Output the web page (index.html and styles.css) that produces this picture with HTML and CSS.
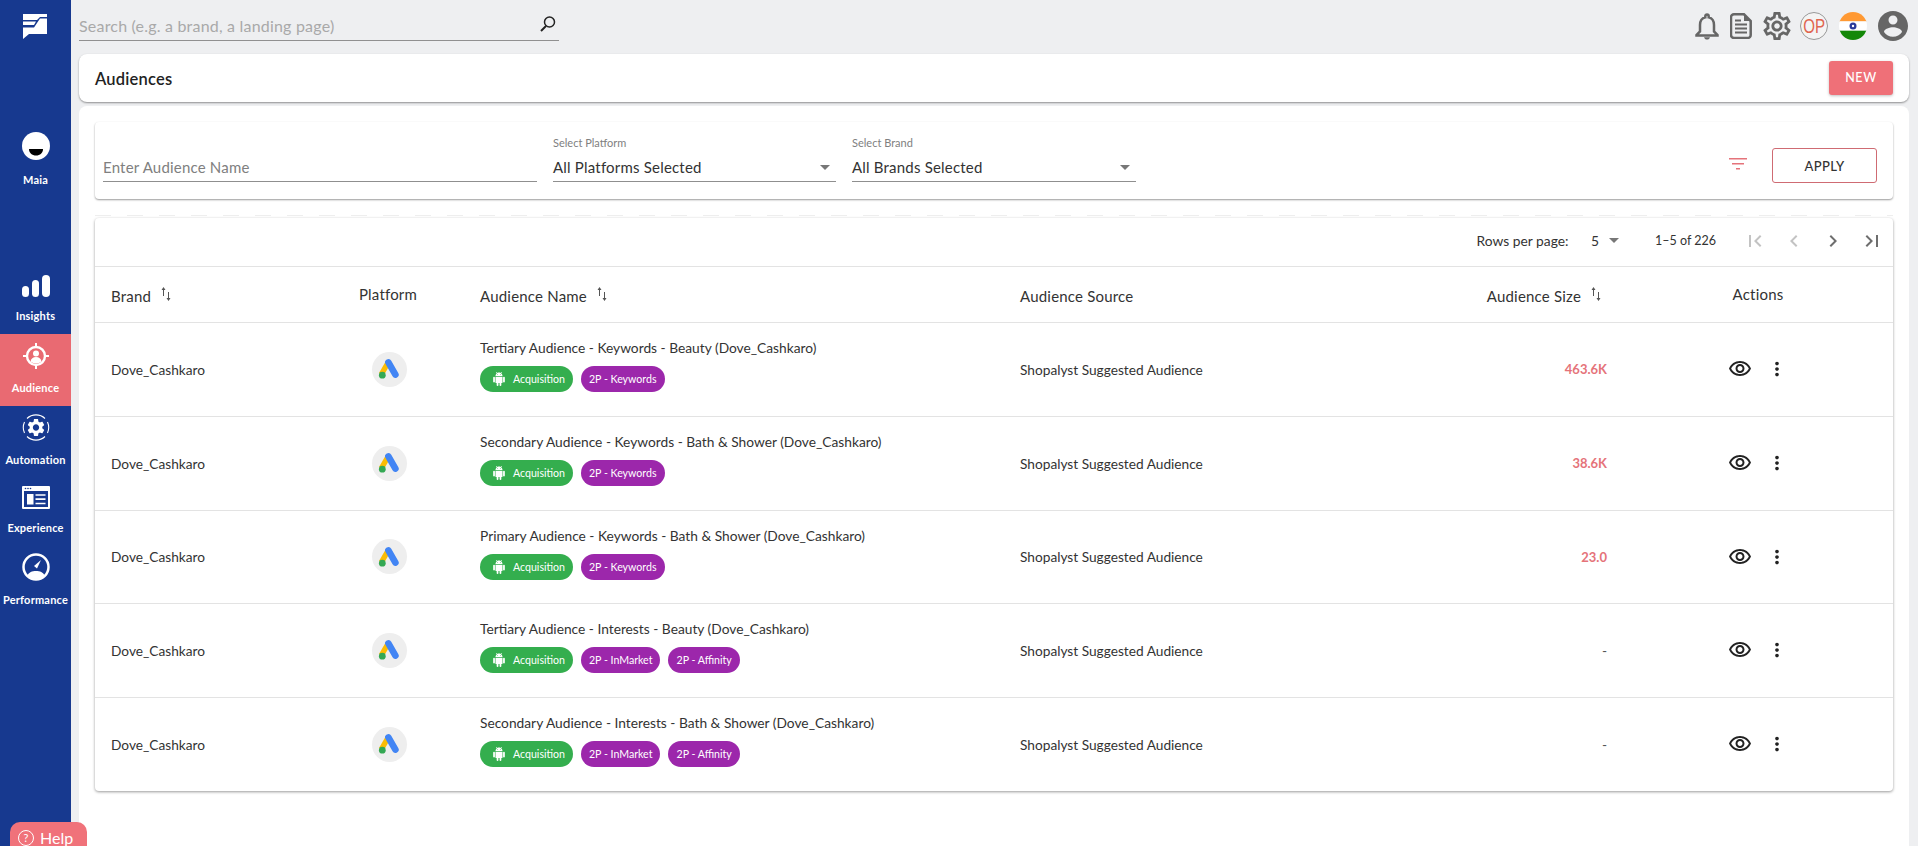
FILE: index.html
```html
<!DOCTYPE html>
<html lang="en">
<head>
<meta charset="utf-8">
<title>Audiences</title>
<link rel="stylesheet" href="styles.css">
</head>
<body>
<svg class="sprite" aria-hidden="true">
<symbol id="eye" viewBox="0 0 24 24"><path d="M12 6c3.79 0 7.17 2.13 8.82 5.5C19.17 14.87 15.79 17 12 17s-7.17-2.13-8.82-5.5C4.83 8.13 8.21 6 12 6m0-2C7 4 2.73 7.11 1 11.5 2.73 15.89 7 19 12 19s9.27-3.11 11-7.5C21.27 7.11 17 4 12 4zm0 5c1.38 0 2.5 1.12 2.5 2.5S13.38 14 12 14s-2.5-1.12-2.5-2.5S10.62 9 12 9m0-2c-2.48 0-4.5 2.02-4.5 4.5S9.52 16 12 16s4.5-2.02 4.5-4.5S14.48 7 12 7z"/></symbol>
<symbol id="dots" viewBox="0 0 24 24"><path d="M12 8c1.1 0 2-.9 2-2s-.9-2-2-2-2 .9-2 2 .9 2 2 2zm0 2c-1.1 0-2 .9-2 2s.9 2 2 2 2-.9 2-2-.9-2-2-2zm0 6c-1.1 0-2 .9-2 2s.9 2 2 2 2-.9 2-2-.9-2-2-2z"/></symbol>
<symbol id="android" viewBox="0 0 24 24"><path d="M6 18c0 .55.45 1 1 1h1v3.5c0 .83.67 1.5 1.5 1.5s1.5-.67 1.5-1.5V19h2v3.5c0 .83.67 1.5 1.5 1.5s1.5-.67 1.5-1.5V19h1c.55 0 1-.45 1-1V8H6v10zM3.5 8C2.67 8 2 8.67 2 9.5v7c0 .83.67 1.5 1.5 1.5S5 17.33 5 16.5v-7C5 8.67 4.33 8 3.5 8zm17 0c-.83 0-1.5.67-1.5 1.5v7c0 .83.67 1.5 1.5 1.5s1.5-.67 1.5-1.5v-7c0-.83-.67-1.5-1.5-1.5zm-4.97-5.84l1.3-1.3c.2-.2.2-.51 0-.71-.2-.2-.51-.2-.71 0l-1.48 1.48C13.85 1.23 12.95 1 12 1c-.96 0-1.86.23-2.66.63L7.85.15c-.2-.2-.51-.2-.71 0-.2.2-.2.51 0 .71l1.31 1.31C6.97 3.26 6 5.01 6 7h12c0-1.99-.97-3.75-2.47-4.84zM10 5H9V4h1v1zm5 0h-1V4h1v1z"/></symbol>
<symbol id="ads" viewBox="0 0 24 24"><path fill="#fbbc04" d="M9.2 3.6 2 16.1l4.6 2.7 7.2-12.5z"/><rect fill="#4285f4" x="11.6" y="1.2" width="6.6" height="20.6" rx="3.3" transform="rotate(-30 14.9 11.5)"/><circle fill="#34a853" cx="5.3" cy="18.2" r="3.4"/></symbol>
<symbol id="sort" viewBox="0 0 10 14"><path d="M2.5 0 .5 3H2v6h1V3h1.5zM7.5 14l2-3H8V5H7v6H5.5z"/></symbol>
</svg>

<aside class="sidebar">
  <svg class="logo" viewBox="0 0 24 25"><path fill="#fff" d="M0 0H24V3H17L14 6H0ZM0 7.5H13L11 11H0ZM0 13.5H11L17 4.5H24V20H6L0 25Z"/></svg>
  <nav class="nav">
    <a class="nav-item maia">
      <svg class="nav-icon" viewBox="0 0 28 28"><ellipse cx="14" cy="14" rx="14" ry="14" fill="#fff"/><path d="M7 17h14c0 4-3 6.5-7 6.5S7 21 7 17z" fill="#000"/></svg>
      <span>Maia</span>
    </a>
    <a class="nav-item insights">
      <svg class="nav-icon" viewBox="0 0 28 22"><rect x="0" y="11" width="7" height="11" rx="3.5" fill="#fff"/><rect x="10" y="5" width="7" height="17" rx="3.5" fill="#fff"/><rect x="20" y="0" width="8" height="22" rx="4" fill="#fff"/></svg>
      <span>Insights</span>
    </a>
    <a class="nav-item audience active">
      <svg class="nav-icon" viewBox="0 0 28 26"><circle cx="14" cy="13" r="9" fill="none" stroke="#fff" stroke-width="2.4"/><path d="M14 0v5M14 21v5M1 13h5M22 13h5" stroke="#fff" stroke-width="2"/><circle cx="14" cy="10.5" r="3" fill="#fff"/><path d="M8.5 18.5c.5-3 2.5-4.5 5.5-4.5s5 1.5 5.5 4.5c-3 2.500-8 2.500-11 0z" fill="#fff"/></svg>
      <span>Audience</span>
    </a>
    <a class="nav-item automation">
      <svg class="nav-icon" viewBox="0 0 28 29"><path d="M5 5.5a13 13 0 0 1 18 0M23 23.5a13 13 0 0 1-18 0M2.5 9a13.5 13.5 0 0 0 0 11M25.5 9a13.5 13.5 0 0 1 0 11" fill="none" stroke="#fff" stroke-width="1.1"/><g transform="translate(3.5 4) scale(.875)"><path fill="#fff" d="M19.14 12.94c.04-.3.06-.61.06-.94 0-.32-.02-.64-.07-.94l2.03-1.58c.18-.14.23-.41.12-.61l-1.92-3.32c-.12-.22-.37-.29-.59-.22l-2.39.96c-.5-.38-1.03-.7-1.62-.94l-.36-2.54c-.04-.24-.24-.41-.48-.41h-3.84c-.24 0-.43.17-.47.41l-.36 2.54c-.59.24-1.13.57-1.62.94l-2.39-.96c-.22-.08-.47 0-.59.22L2.74 8.87c-.12.21-.08.47.12.61l2.03 1.58c-.05.3-.09.63-.09.94s.02.64.07.94l-2.03 1.58c-.18.14-.23.41-.12.61l1.92 3.32c.12.22.37.29.59.22l2.39-.96c.5.38 1.03.7 1.62.94l.36 2.54c.05.24.24.41.48.41h3.84c.24 0 .44-.17.47-.41l.36-2.54c.59-.24 1.13-.56 1.62-.94l2.39.96c.22.08.47 0 .59-.22l1.92-3.32c.12-.22.07-.47-.12-.61l-2.01-1.58zM12 15.6c-1.98 0-3.6-1.62-3.6-3.6s1.62-3.6 3.6-3.6 3.6 1.62 3.6 3.6-1.62 3.6-3.6 3.6z"/></g></svg>
      <span>Automation</span>
    </a>
    <a class="nav-item experience">
      <svg class="nav-icon" viewBox="0 0 28 23"><path fill="#fff" fill-rule="evenodd" d="M1 0h26a1 1 0 0 1 1 1v21a1 1 0 0 1-1 1H1a1 1 0 0 1-1-1V1a1 1 0 0 1 1-1zM2 5v16h24V5z"/><circle cx="3.5" cy="2.5" r=".8" fill="#17398f"/><circle cx="6" cy="2.5" r=".8" fill="#17398f"/><circle cx="8.5" cy="2.5" r=".8" fill="#17398f"/><rect x="5" y="8" width="6.5" height="10.5" fill="#fff"/><path d="M13.5 9h10M13.5 13.2h10M13.5 17.5h10" stroke="#fff" stroke-width="1.7"/></svg>
      <span>Experience</span>
    </a>
    <a class="nav-item performance">
      <svg class="nav-icon" viewBox="0 0 28 28"><circle cx="14" cy="14" r="12.5" fill="none" stroke="#fff" stroke-width="2.5"/><path d="M5 23c2-4 5-5 9-5s7 1 9 5c-5 4-13 4-18 0z" fill="#fff"/><path d="M12 13 19 7l-4 8.5z" fill="#fff"/></svg>
      <span>Performance</span>
    </a>
  </nav>
</aside>

<div class="main">
  <header class="topbar">
    <div class="search">
      <span class="search-text">Search (e.g. a brand, a landing page)</span>
      <svg class="search-icon" viewBox="0 0 18 18"><circle cx="10.5" cy="7" r="5" fill="none" stroke="#222" stroke-width="1.5"/><path d="M7 11 2 16" stroke="#222" stroke-width="2"/></svg>
    </div>
    <div class="top-icons">
      <svg class="bell" viewBox="0 0 24 28"><path d="M12 2.5a1.7 1.7 0 0 0-1.7 1.7v1.2C6.5 6.3 5 9.5 5 13v6.5L1.5 23v.5h21V23L19 19.5V13c0-3.5-1.5-6.7-5.3-7.6V4.2A1.7 1.7 0 0 0 12 2.5z" fill="none" stroke="#666" stroke-width="2.5"/><path d="M9 25.3h6c-.5 1.5-1.5 2.3-3 2.3s-2.5-.8-3-2.3z" fill="#666"/></svg>
      <svg class="doc" viewBox="0 0 22 26"><path d="M4 1.3h10L20.7 8v14a3 3 0 0 1-3 3H4a3 3 0 0 1-3-3V4.3a3 3 0 0 1 3-3z" fill="none" stroke="#666" stroke-width="2.5"/><path d="M14 1v7h7z" fill="#666"/><path d="M5 7.5h6M5 11.5h12M5 15.5h12M5 19.5h12" stroke="#666" stroke-width="2"/></svg>
      <svg class="gear" viewBox="2 2 20 20"><path fill="#666" d="M19.43 12.98c.04-.32.07-.64.07-.98 0-.34-.03-.66-.07-.98l2.11-1.65c.19-.15.24-.42.12-.64l-2-3.46c-.09-.16-.26-.25-.44-.25-.06 0-.12.01-.17.03l-2.49 1c-.52-.4-1.08-.73-1.69-.98l-.38-2.65C14.46 2.18 14.25 2 14 2h-4c-.25 0-.46.18-.49.42l-.38 2.65c-.61.25-1.17.59-1.69.98l-2.49-1c-.06-.02-.12-.03-.18-.03-.17 0-.34.09-.43.25l-2 3.46c-.13.22-.07.49.12.64l2.11 1.65c-.04.32-.07.65-.07.98 0 .33.03.66.07.98l-2.11 1.65c-.19.15-.24.42-.12.64l2 3.46c.09.16.26.25.44.25.06 0 .12-.01.17-.03l2.49-1c.52.4 1.08.73 1.69.98l.38 2.65c.03.24.24.42.49.42h4c.25 0 .46-.18.49-.42l.38-2.65c.61-.25 1.17-.59 1.69-.98l2.49 1c.06.02.12.03.18.03.17 0 .34-.09.43-.25l2-3.46c.12-.22.07-.49-.12-.64l-2.11-1.65zm-1.98-1.71c.04.31.05.52.05.73 0 .21-.02.43-.05.73l-.14 1.13.89.7 1.08.84-.7 1.21-1.27-.51-1.04-.42-.9.68c-.43.32-.84.56-1.25.73l-1.06.43-.16 1.13-.2 1.35h-1.4l-.19-1.35-.16-1.13-1.06-.43c-.43-.18-.83-.41-1.23-.71l-.91-.7-1.06.43-1.27.51-.7-1.21 1.08-.84.89-.7-.14-1.13c-.03-.31-.05-.54-.05-.74s.02-.43.05-.73l.14-1.13-.89-.7-1.08-.84.7-1.21 1.27.51 1.04.42.9-.68c.43-.32.84-.56 1.25-.73l1.06-.43.16-1.13.2-1.35h1.39l.19 1.35.16 1.13 1.06.43c.43.18.83.41 1.23.71l.91.7 1.06-.43 1.27-.51.7 1.21-1.07.85-.89.7.14 1.13zM12 8c-2.21 0-4 1.79-4 4s1.79 4 4 4 4-1.79 4-4-1.79-4-4-4zm0 6c-1.1 0-2-.9-2-2s.9-2 2-2 2 .9 2 2-.9 2-2 2z"/></svg>
      <span class="op"><span class="op-text">OP</span></span>
      <span class="flag"><svg viewBox="0 0 28 28"><rect width="28" height="9.4" fill="#ff9933"/><rect y="9.4" width="28" height="9.3" fill="#fff"/><rect y="18.7" width="28" height="9.3" fill="#138808"/><circle cx="14" cy="14" r="3.5" fill="#2a3a9a"/><circle cx="14" cy="14" r="1.2" fill="#fff"/></svg></span>
      <svg class="avatar" viewBox="2 2 20 20"><path fill="#666" d="M12 2C6.48 2 2 6.48 2 12s4.48 10 10 10 10-4.48 10-10S17.52 2 12 2zm0 3c1.66 0 3 1.34 3 3s-1.34 3-3 3-3-1.34-3-3 1.34-3 3-3zm0 14.2c-2.5 0-4.71-1.28-6-3.22.03-1.99 4-3.08 6-3.08 1.99 0 5.97 1.09 6 3.08-1.29 1.94-3.5 3.22-6 3.22z"/></svg>
    </div>
  </header>

  <section class="title-card">
    <h1>Audiences</h1>
    <button class="btn-new">NEW</button>
  </section>

  <section class="content-card">
    <div class="filter-card">
      <div class="field name-field"><span class="placeholder">Enter Audience Name</span></div>
      <div class="field select-field platform">
        <label>Select Platform</label>
        <div class="select-value"><span>All Platforms Selected</span><i class="caret"></i></div>
      </div>
      <div class="field select-field">
        <label>Select Brand</label>
        <div class="select-value"><span>All Brands Selected</span><i class="caret"></i></div>
      </div>
      <svg class="filter-icon" viewBox="0 0 18 12"><path d="M0 0h18v1.5H0zM3 5h12v1.5H3zM7 10h4v1.5H7z" fill="#e5737a"/></svg>
      <button class="btn-apply">APPLY</button>
    </div>

    <div class="dash"></div>

    <div class="table-card">
      <div class="pager">
        <span class="rows-label">Rows per page:</span>
        <span class="rows-val">5</span><i class="caret"></i>
        <span class="range">1–5 of 226</span>
        <div class="pager-icons">
          <svg class="muted" viewBox="0 0 24 24"><path d="M18.41 16.59 13.82 12l4.59-4.59L17 6l-6 6 6 6zM6 6h2v12H6z"/></svg>
          <svg class="muted" viewBox="0 0 24 24"><path d="M15.41 7.41 14 6l-6 6 6 6 1.41-1.41L10.83 12z"/></svg>
          <svg viewBox="0 0 24 24"><path d="M10 6 8.59 7.41 13.17 12l-4.58 4.58L10 18l6-6z"/></svg>
          <svg viewBox="0 0 24 24"><path d="M5.59 7.41 10.18 12l-4.59 4.59L7 18l6-6-6-6zM16 6h2v12h-2z"/></svg>
        </div>
      </div>
      <table class="grid">
        <thead>
          <tr>
            <th class="c-brand">Brand<svg class="sort"><use href="#sort"/></svg></th>
            <th class="c-plat">Platform</th>
            <th class="c-name">Audience Name<svg class="sort"><use href="#sort"/></svg></th>
            <th class="c-src">Audience Source</th>
            <th class="c-size">Audience Size<svg class="sort"><use href="#sort"/></svg></th>
            <th class="c-act">Actions</th>
          </tr>
        </thead>
        <tbody>
          <tr>
            <td class="c-brand">Dove_Cashkaro</td>
            <td class="c-plat"><span class="plat-badge"><svg><use href="#ads"/></svg></span></td>
            <td class="c-name">
              <div class="aud-name">Tertiary Audience - Keywords - Beauty (Dove_Cashkaro)</div>
              <div class="chips"><span class="chip green"><svg><use href="#android"/></svg>Acquisition</span><span class="chip purple">2P - Keywords</span></div>
            </td>
            <td class="c-src">Shopalyst Suggested Audience</td>
            <td class="c-size num">463.6K</td>
            <td class="c-act"><div class="acts"><svg class="eye"><use href="#eye"/></svg><svg class="dots"><use href="#dots"/></svg></div></td>
          </tr>
          <tr>
            <td class="c-brand">Dove_Cashkaro</td>
            <td class="c-plat"><span class="plat-badge"><svg><use href="#ads"/></svg></span></td>
            <td class="c-name">
              <div class="aud-name">Secondary Audience - Keywords - Bath &amp; Shower (Dove_Cashkaro)</div>
              <div class="chips"><span class="chip green"><svg><use href="#android"/></svg>Acquisition</span><span class="chip purple">2P - Keywords</span></div>
            </td>
            <td class="c-src">Shopalyst Suggested Audience</td>
            <td class="c-size num">38.6K</td>
            <td class="c-act"><div class="acts"><svg class="eye"><use href="#eye"/></svg><svg class="dots"><use href="#dots"/></svg></div></td>
          </tr>
          <tr class="row-short">
            <td class="c-brand">Dove_Cashkaro</td>
            <td class="c-plat"><span class="plat-badge"><svg><use href="#ads"/></svg></span></td>
            <td class="c-name">
              <div class="aud-name">Primary Audience - Keywords - Bath &amp; Shower (Dove_Cashkaro)</div>
              <div class="chips"><span class="chip green"><svg><use href="#android"/></svg>Acquisition</span><span class="chip purple">2P - Keywords</span></div>
            </td>
            <td class="c-src">Shopalyst Suggested Audience</td>
            <td class="c-size num">23.0</td>
            <td class="c-act"><div class="acts"><svg class="eye"><use href="#eye"/></svg><svg class="dots"><use href="#dots"/></svg></div></td>
          </tr>
          <tr>
            <td class="c-brand">Dove_Cashkaro</td>
            <td class="c-plat"><span class="plat-badge"><svg><use href="#ads"/></svg></span></td>
            <td class="c-name">
              <div class="aud-name">Tertiary Audience - Interests - Beauty (Dove_Cashkaro)</div>
              <div class="chips"><span class="chip green"><svg><use href="#android"/></svg>Acquisition</span><span class="chip purple">2P - InMarket</span><span class="chip purple">2P - Affinity</span></div>
            </td>
            <td class="c-src">Shopalyst Suggested Audience</td>
            <td class="c-size dash-val">-</td>
            <td class="c-act"><div class="acts"><svg class="eye"><use href="#eye"/></svg><svg class="dots"><use href="#dots"/></svg></div></td>
          </tr>
          <tr>
            <td class="c-brand">Dove_Cashkaro</td>
            <td class="c-plat"><span class="plat-badge"><svg><use href="#ads"/></svg></span></td>
            <td class="c-name">
              <div class="aud-name">Secondary Audience - Interests - Bath &amp; Shower (Dove_Cashkaro)</div>
              <div class="chips"><span class="chip green"><svg><use href="#android"/></svg>Acquisition</span><span class="chip purple">2P - InMarket</span><span class="chip purple">2P - Affinity</span></div>
            </td>
            <td class="c-src">Shopalyst Suggested Audience</td>
            <td class="c-size dash-val">-</td>
            <td class="c-act"><div class="acts"><svg class="eye"><use href="#eye"/></svg><svg class="dots"><use href="#dots"/></svg></div></td>
          </tr>
        </tbody>
      </table>
    </div>
  </section>
</div>

<button class="help"><span class="help-q">?</span>Help</button>
</body>
</html>
```
FILE: styles.css
```css
* { box-sizing: border-box; }
html, body { margin: 0; height: 100%; overflow: hidden; }
body {
  display: flex;
  background: #eeeff1;
  font-family: "Lato", "Liberation Sans", sans-serif;
  color: #333;
}
.sprite { position: absolute; width: 0; height: 0; }

.sidebar {
  width: 71px;
  flex: none;
  background: #17398f;
  display: flex;
  flex-direction: column;
  align-items: center;
  padding-top: 14px;
}
.logo { width: 24px; height: 25px; display: block; flex: none; margin-left: -1px; }
.nav { display: flex; flex-direction: column; width: 100%; margin-top: 93px; }
.nav-item {
  display: flex;
  flex-direction: column;
  align-items: center;
  color: #fff;
  font-size: 11px;
  line-height: 14px;
  font-weight: 700;
  letter-spacing: 0.2px;
}
.nav-icon { width: 28px; display: block; margin-bottom: 12px; }
.maia { height: 143px; }
.maia .nav-icon { height: 28px; margin-bottom: 13px; }
.insights { height: 59px; }
.insights .nav-icon { height: 22px; }
.audience { height: 72px; padding-top: 9px; }
.audience .nav-icon { height: 26px; }
.automation { height: 72px; padding-top: 7px; }
.automation .nav-icon { height: 29px; margin-bottom: 11px; }
.experience { height: 67px; padding-top: 8px; }
.experience .nav-icon { height: 23px; }
.performance { padding-top: 8px; }
.performance .nav-icon { height: 28px; }
.nav-item.active { background: #e96a72; }

.main { flex: 1; min-width: 0; display: flex; flex-direction: column; padding: 0 9px 0 8px; }
.topbar { height: 54px; flex: none; display: flex; align-items: flex-start; justify-content: space-between; padding-top: 11px; }
.search {
  width: 480px;
  height: 30px;
  border-bottom: 1px solid #909090;
  display: flex;
  align-items: center;
  justify-content: space-between;
  padding-right: 2px;
}
.search-text { font-size: 16px; color: #a9a9a9; letter-spacing: 0.2px; }
.search-icon { width: 18px; height: 18px; margin-top: -4px; }
.top-icons { display: flex; align-items: center; gap: 11px; margin-right: 1px; }
.bell { width: 24px; height: 28px; display: block; }
.doc { width: 22px; height: 26px; display: block; }
.gear { width: 28px; height: 28px; display: block; }
.op {
  width: 28px; height: 28px;
  margin-left: -2px;
  border: 1px solid #999;
  border-radius: 50%;
  background: #f4f4f4;
  color: #e0654f;
  font-family: "Liberation Sans", sans-serif;
  font-size: 21px;
  line-height: 26px;
  text-align: center;
  overflow: hidden;
  display: flex;
  justify-content: center;
}
.op-text { display: block; transform: scaleX(.72); }
.flag { width: 28px; height: 28px; border-radius: 50%; overflow: hidden; display: block; }
.flag svg { display: block; width: 28px; height: 28px; }
.avatar { width: 30px; height: 30px; display: block; }

.title-card {
  height: 48px;
  background: #fff;
  border-radius: 8px;
  box-shadow: 0 1px 2px rgba(0,0,0,.4);
  display: flex;
  align-items: center;
  justify-content: space-between;
  padding: 0 16px;
  flex: none;
}
.title-card h1 { margin: 2px 0 0; font-size: 16.5px; font-weight: 600; color: #222; letter-spacing: 0.2px; }
.btn-new {
  width: 64px; height: 34px;
  background: #ef7078;
  color: #fff;
  border: 0;
  border-radius: 3px;
  font: 500 12.5px "Lato", sans-serif;
  letter-spacing: 0.6px;
  box-shadow: 0 1px 3px rgba(0,0,0,.25);
  margin-top: -1px;
}

.content-card {
  flex: 1;
  margin-top: 4px;
  background: #fff;
  border-radius: 8px 8px 0 0;
  padding: 16px 16px 0;
  min-height: 0;
}
.filter-card {
  height: 77px;
  border-radius: 4px;
  box-shadow: 0 1px 2px rgba(0,0,0,.4);
  display: flex;
  align-items: flex-end;
  padding: 0 16px 17px 8px;
}
.field { border-bottom: 1px solid #8f8f8f; height: 40px; }
.name-field { width: 434px; display: flex; align-items: flex-end; padding-bottom: 5px; }
.placeholder { font-size: 15px; color: #808080; letter-spacing: 0.2px; }
.select-field { width: 284px; margin-left: 16px; position: relative; display: flex; flex-direction: column; justify-content: flex-end; }
.select-field.platform { width: 283px; }
.select-field label { font-size: 11px; color: #808080; position: absolute; top: -6px; left: 0; }
.select-value { display: flex; align-items: center; justify-content: space-between; font-size: 15px; color: #333; padding: 0 6px 5px 0; letter-spacing: 0.2px; }
.caret { display: block; width: 0; height: 0; border: 5px solid transparent; border-top-color: #777; border-bottom-width: 0; }
.filter-icon { width: 18px; height: 12px; margin: 0 0 12px auto; }
.btn-apply {
  width: 105px; height: 35px;
  margin-left: 25px; margin-bottom: -1px;
  background: #fff;
  border: 1px solid #cf6b73;
  border-radius: 3px;
  font: 500 13px "Lato", sans-serif;
  letter-spacing: 0.4px;
  color: #333;
}

.dash {
  height: 1px;
  margin: 16px 0 2px;
  background: repeating-linear-gradient(90deg, #eeeeee 0 16px, transparent 16px 32px);
}
.table-card {
  box-shadow: 0 1px 3px rgba(0,0,0,.4);
  border-radius: 4px;
}
.pager {
  height: 49px;
  display: flex;
  align-items: center;
  justify-content: flex-end;
  white-space: nowrap;
  font-size: 13.8px;
  border-bottom: 1px solid #e3e3e3;
  color: #333;
  padding: 0 9px 3px 0;
}
.rows-val { margin: 0 10px 0 22.5px; }
.range { margin-left: 36px; font-size: 12.5px; }
.pager-icons { display: flex; margin-left: 27px; gap: 15px; }
.pager-icons svg { width: 24px; height: 24px; fill: #6e6e6e; display: block; }
.pager-icons svg.muted { fill: #c3c3c3; }

.grid { width: 100%; border-collapse: collapse; table-layout: fixed; font-size: 13.7px; }
.grid th { height: 55px; font-weight: 400; font-size: 15px; color: #333; padding: 3px 16px 0; border-bottom: 1px solid #e3e3e3; text-align: left; letter-spacing: 0.2px; }
.grid td { height: 94px; padding: 0 16px; border-bottom: 1px solid #e3e3e3; color: #333; }
.grid tr.row-short td { height: 93px; }
.grid tbody tr:last-child td { border-bottom: 0; }
.sort { width: 10px; height: 14px; margin-left: 10px; fill: #555; vertical-align: 1px; }
.grid .c-brand { width: 217px; }
.grid .c-plat { width: 152px; text-align: center; padding: 0; }
.grid .c-name { width: 540px; }
.grid td.c-name { padding-bottom: 6px; }
.grid .c-src { width: 446px; }
.grid .c-size { width: 173px; text-align: right; }
.grid th.c-size { padding-right: 22px; }
.grid .c-act { text-align: center; padding: 0; }
.plat-badge { display: inline-flex; width: 35px; height: 35px; margin-left: 2px; border-radius: 50%; background: #eee; align-items: center; justify-content: center; vertical-align: middle; }
.plat-badge svg { width: 24px; height: 24px; }
.aud-name { font-size: 13.75px; margin-bottom: 10px; line-height: 16px; }
.chips { display: flex; gap: 8px; }
.chip {
  height: 26px;
  border-radius: 13px;
  color: #fff;
  font-size: 10.6px;
  display: inline-flex;
  align-items: center;
  padding: 0 8px;
}
.chip svg { width: 14px; height: 14px; fill: #fff; margin: 0 7px 0 4px; }
.chip.green { background: #34ae4e; }
.chip.purple { background: #9c27ab; }
.grid td.num { color: #e5737a; font-weight: 700; font-size: 13px; }
.grid td.dash-val { color: #555; }
.acts { display: flex; align-items: center; justify-content: center; gap: 14px; }
.eye { width: 24px; height: 24px; fill: #222; }
.dots { width: 22px; height: 22px; fill: #222; }

.help {
  position: absolute;
  left: 10px;
  top: 822px;
  width: 77px;
  height: 36px;
  background: #f0727a;
  color: #fff;
  border: 0;
  border-radius: 10px;
  font: 400 16px "Lato", sans-serif;
  display: flex;
  align-items: flex-start;
  gap: 6px;
  padding: 6px 0 0 8px;
}
.help-q { width: 16px; height: 16px; border: 1px solid #fff; border-radius: 50%; font-size: 11px; line-height: 14px; text-align: center; margin-top: 2px; }
```
